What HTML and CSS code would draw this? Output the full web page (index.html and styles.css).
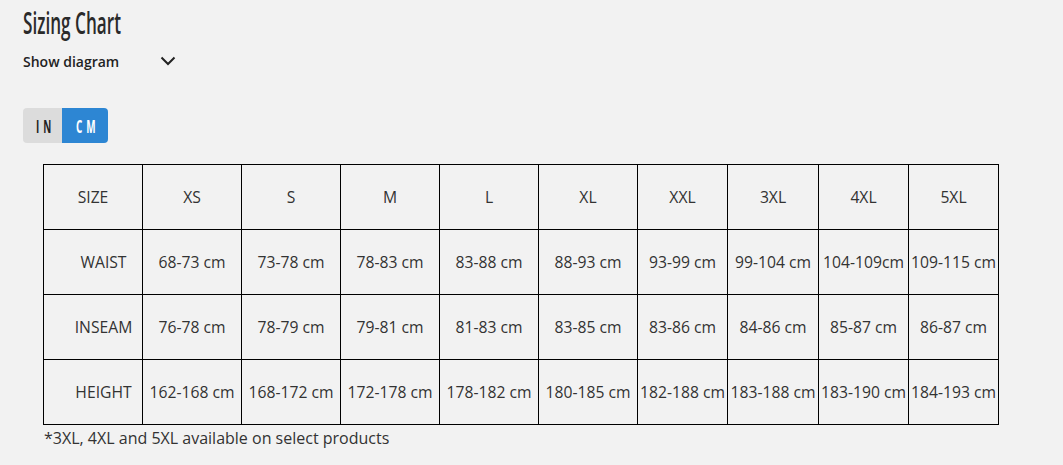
FILE: index.html
```html
<!DOCTYPE html>
<html>
<head>
<meta charset="utf-8">
<link rel="stylesheet" href="styles.css">
</head>
<body>
<div class="page">
  <h1 class="title"><span class="squeeze">Sizing Chart</span></h1>
  <div class="diagram-toggle">
    <span>Show diagram</span>
    <svg class="chev" width="16" height="10" viewBox="0 0 16 10"><path d="M1.5 1.5 L8 8 L14.5 1.5" fill="none" stroke="#222" stroke-width="2"/></svg>
  </div>
  <div class="units">
    <span class="unit"><span class="squeeze">IN</span></span>
    <span class="unit active"><span class="squeeze">CM</span></span>
  </div>
  <table class="chart">
    <colgroup>
      <col style="width:99px"><col style="width:99px"><col style="width:99px"><col style="width:99px"><col style="width:99px"><col style="width:99px"><col style="width:90px"><col style="width:91px"><col style="width:90px"><col style="width:90px">
    </colgroup>
    <tr><td>SIZE</td><td>XS</td><td>S</td><td>M</td><td>L</td><td>XL</td><td>XXL</td><td>3XL</td><td>4XL</td><td>5XL</td></tr>
    <tr><td class="label">WAIST</td><td>68-73 cm</td><td>73-78 cm</td><td>78-83 cm</td><td>83-88 cm</td><td>88-93 cm</td><td>93-99 cm</td><td>99-104 cm</td><td>104-109cm</td><td>109-115 cm</td></tr>
    <tr><td class="label">INSEAM</td><td>76-78 cm</td><td>78-79 cm</td><td>79-81 cm</td><td>81-83 cm</td><td>83-85 cm</td><td>83-86 cm</td><td>84-86 cm</td><td>85-87 cm</td><td>86-87 cm</td></tr>
    <tr><td class="label">HEIGHT</td><td>162-168 cm</td><td>168-172 cm</td><td>172-178 cm</td><td>178-182 cm</td><td>180-185 cm</td><td>182-188 cm</td><td>183-188 cm</td><td>183-190 cm</td><td>184-193 cm</td></tr>
  </table>
  <p class="note">*3XL, 4XL and 5XL available on select products</p>
</div>
</body>
</html>
```

FILE: styles.css
```css
html, body {
  margin: 0;
  padding: 0;
  background: #f2f2f2;
}
.page {
  padding: 5px 0 0 23px;
  font-family: "Open Sans", sans-serif;
  color: #333;
}
.title {
  margin: 0;
  font-family: "Open Sans", sans-serif;
  font-weight: 600;
  font-size: 31px;
  line-height: 34px;
  color: #2a2a2a;
  height: 34px;
}
.squeeze {
  display: inline-block;
  transform: scaleX(0.553);
  transform-origin: left center;
  white-space: nowrap;
}
.diagram-toggle {
  display: flex;
  align-items: center;
  gap: 41px;
  margin-top: 10px;
  font-size: 14px;
  font-weight: 600;
  color: #222;
  height: 24px;
}
.chev {
  display: block;
}
.units {
  display: inline-flex;
  margin-top: 35px;
  border-radius: 4px;
  overflow: hidden;
  height: 35px;
}
.unit {
  display: flex;
  align-items: center;
  justify-content: flex-start;
  font-family: "Open Sans", sans-serif;
  font-weight: 700;
  font-size: 18px;
  background: #dcdcdc;
  color: #222;
  width: 39px;
  box-sizing: border-box;
  padding-left: 13px;
  overflow: hidden;
}
.unit .squeeze {
  transform: scaleX(0.55);
  letter-spacing: 7px;
}
.unit.active {
  background: #2d86d3;
  color: #fff;
  width: 46px;
  padding-left: 14px;
}
.chart {
  margin: 21px 0 0 20px;
  border-collapse: collapse;
  table-layout: fixed;
  width: 955px;
  font-size: 15.7px;
  color: #333;
}
.chart td {
  border: 1px solid #000;
  height: 65px;
  padding: 0;
  text-align: center;
  white-space: nowrap;
  box-sizing: border-box;
}
.chart td.label {
  padding-left: 21px;
}
.note {
  margin: 3px 0 0 21px;
  font-size: 16px;
  line-height: 20px;
}
```
